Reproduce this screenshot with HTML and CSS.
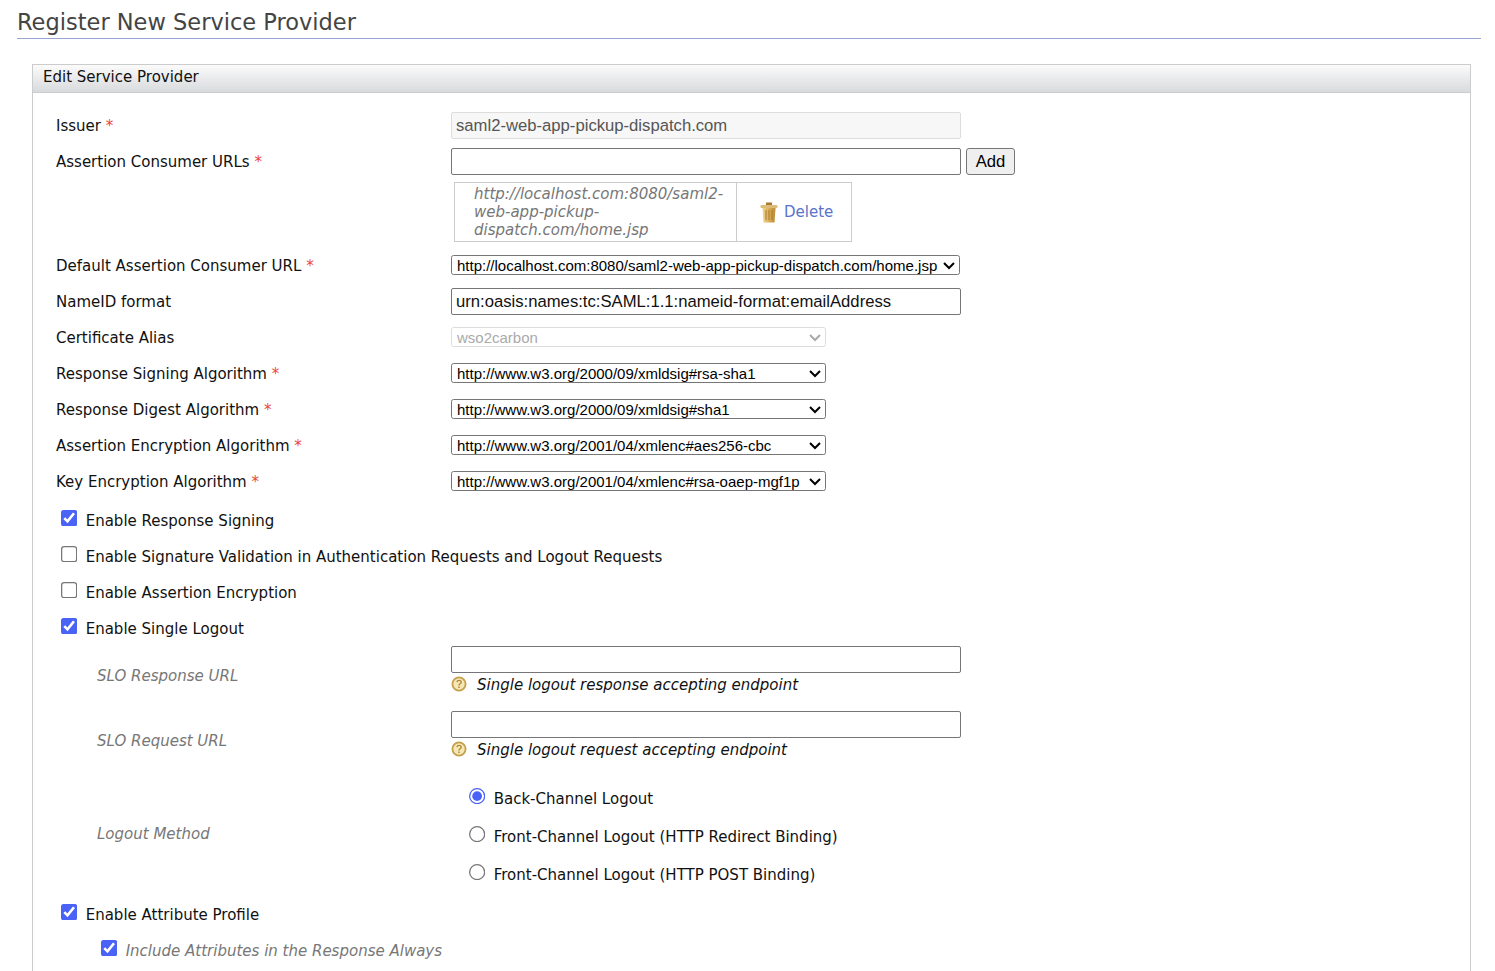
FILE: index.html
```html
<!DOCTYPE html>
<html lang="en">
<head>
    <meta charset="UTF-8">
    <title>Register New Service Provider</title>
    <link rel="stylesheet" href="styles.css">
</head>
<body>
    <h2 class="page-title">Register New Service Provider</h2>
    <div class="box">
        <div class="box-header">Edit Service Provider</div>
        <form class="box-body">
            <div class="row">
                <label class="name">Issuer <span class="req">*</span></label>
                <input type="text" class="text-input" value="saml2-web-app-pickup-dispatch.com" disabled>
            </div>
            <div class="row">
                <label class="name">Assertion Consumer URLs <span class="req">*</span></label>
                <input type="text" class="text-input">
                <button type="button" class="add-btn">Add</button>
            </div>
            <div class="url-row">
                <div class="url-table">
                    <div class="url-cell">http://localhost.com:8080/saml2-web-app-pickup-dispatch.com/home.jsp</div>
                    <div class="delete-cell">
                        <svg class="trash" width="18" height="21" viewBox="0 0 18 21">
                            <defs>
                                <linearGradient id="can" x1="0" x2="1" y1="0" y2="0">
                                    <stop offset="0" stop-color="#f0d596"/>
                                    <stop offset="0.5" stop-color="#dcae55"/>
                                    <stop offset="1" stop-color="#b98a35"/>
                                </linearGradient>
                            </defs>
                            <rect x="6" y="0.5" width="6" height="3" fill="#a9782c"/>
                            <rect x="0.5" y="3" width="17" height="3" rx="1" fill="#dcbc78"/>
                            <path d="M2.5 6h13l-1 14.500h-11z" fill="url(#can)"/>
                            <path d="M6 8v10M9 8v10M12 8v10" stroke="#a87a30" stroke-width="1"/>
                        </svg>
                        <a class="delete-link">Delete</a>
                    </div>
                </div>
            </div>
            <div class="row row-select row-tight">
                <label class="name">Default Assertion Consumer URL <span class="req">*</span></label>
                <select class="select-wide">
                    <option>http://localhost.com:8080/saml2-web-app-pickup-dispatch.com/home.jsp</option>
                </select>
            </div>
            <div class="row row-name">
                <label class="name">NameID format</label>
                <input type="text" class="text-input" value="urn:oasis:names:tc:SAML:1.1:nameid-format:emailAddress">
            </div>
            <div class="row row-select">
                <label class="name">Certificate Alias</label>
                <select class="select-mid" disabled><option>wso2carbon</option></select>
            </div>
            <div class="row row-select">
                <label class="name">Response Signing Algorithm <span class="req">*</span></label>
                <select class="select-mid"><option>http://www.w3.org/2000/09/xmldsig#rsa-sha1</option></select>
            </div>
            <div class="row row-select">
                <label class="name">Response Digest Algorithm <span class="req">*</span></label>
                <select class="select-mid"><option>http://www.w3.org/2000/09/xmldsig#sha1</option></select>
            </div>
            <div class="row row-select">
                <label class="name">Assertion Encryption Algorithm <span class="req">*</span></label>
                <select class="select-mid"><option>http://www.w3.org/2001/04/xmlenc#aes256-cbc</option></select>
            </div>
            <div class="row row-select">
                <label class="name">Key Encryption Algorithm <span class="req">*</span></label>
                <select class="select-mid"><option>http://www.w3.org/2001/04/xmlenc#rsa-oaep-mgf1p</option></select>
            </div>

            <label class="check-row check-first"><input type="checkbox" checked> Enable Response Signing</label>
            <label class="check-row"><input type="checkbox"> Enable Signature Validation in Authentication Requests and Logout Requests</label>
            <label class="check-row"><input type="checkbox"> Enable Assertion Encryption</label>
            <label class="check-row"><input type="checkbox" checked> Enable Single Logout</label>

            <div class="sub-row">
                <label class="sub-name">SLO Response URL</label>
                <div class="field">
                    <input type="text" class="text-input">
                    <div class="hint">
                        <svg class="help" width="16" height="16" viewBox="0 0 16 16">
                            <circle cx="8" cy="8" r="6.600" fill="#f6e7b8" stroke="#c4a04a" stroke-width="1.800"/>
                            <path d="M5.900 6.200c.2-1.200 1.100-1.800 2.200-1.800 1.200 0 2.100.7 2.100 1.800 0 1.600-2.200 1.600-2.200 3.200" fill="none" stroke="#b08a35" stroke-width="1.400"/>
                            <rect x="7.200" y="10.500" width="1.500" height="1.500" fill="#b08a35"/>
                        </svg>
                        <span>Single logout response accepting endpoint</span>
                    </div>
                </div>
            </div>
            <div class="sub-row">
                <label class="sub-name">SLO Request URL</label>
                <div class="field">
                    <input type="text" class="text-input">
                    <div class="hint">
                        <svg class="help" width="16" height="16" viewBox="0 0 16 16">
                            <circle cx="8" cy="8" r="6.600" fill="#f6e7b8" stroke="#c4a04a" stroke-width="1.800"/>
                            <path d="M5.900 6.200c.2-1.200 1.100-1.800 2.200-1.800 1.200 0 2.100.7 2.100 1.800 0 1.600-2.200 1.600-2.200 3.200" fill="none" stroke="#b08a35" stroke-width="1.400"/>
                            <rect x="7.200" y="10.500" width="1.500" height="1.500" fill="#b08a35"/>
                        </svg>
                        <span>Single logout request accepting endpoint</span>
                    </div>
                </div>
            </div>
            <div class="logout-row">
                <label class="sub-name">Logout Method</label>
                <div class="radios">
                    <label class="radio-row"><input type="radio" name="logout" checked> Back-Channel Logout</label>
                    <label class="radio-row"><input type="radio" name="logout"> Front-Channel Logout (HTTP Redirect Binding)</label>
                    <label class="radio-row"><input type="radio" name="logout"> Front-Channel Logout (HTTP POST Binding)</label>
                </div>
            </div>

            <label class="check-row"><input type="checkbox" checked> Enable Attribute Profile</label>
            <label class="check-row check-sub"><input type="checkbox" checked> Include Attributes in the Response Always</label>
        </form>
    </div>
</body>
</html>
```

FILE: styles.css
```css
html, body {
    height: 971px;
    overflow: hidden;
}
body {
    font-family: "DejaVu Sans", sans-serif;
    font-size: 15px;
    color: #111;
    background: #fff;
    margin: 0;
    padding: 0 14px 0 17px;
}
.page-title {
    font-size: 22.5px;
    font-weight: normal;
    line-height: 28px;
    color: #444;
    margin: 0 0 25px;
    padding: 8px 0 2px;
    border-bottom: 1px solid #98a6d0;
}
.box {
    margin: 0 10px 0 15px;
    border: 1px solid #ccc;
    border-bottom: none;
}
.box-header {
    height: 27px;
    line-height: 25px;
    padding-left: 10px;
    background: linear-gradient(#fbfbfb, #d8dadc);
    border-bottom: 1px solid #ccc;
}
.box-body {
    padding: 15px 0 40px 23px;
}
.row {
    display: flex;
    padding: 4px 0 5px;
}
.row-select {
    padding: 4px 0 12px;
}
.row-tight {
    padding-bottom: 9px;
}
.row-name {
    padding-bottom: 8px;
}
.name {
    width: 395px;
    height: 27px;
    box-sizing: border-box;
    padding-top: 1px;
    flex: none;
    line-height: 27px;
}
.row-select .name {
    height: 20px;
    line-height: 20px;
}
.req {
    color: #e9463c;
}
.text-input {
    width: 510px;
    height: 27px;
    box-sizing: border-box;
    font-family: "Liberation Sans", sans-serif;
    font-size: 16.67px;
    padding: 1px 4px;
    margin: 0;
    border: 1px solid #767676;
    border-radius: 2px;
    color: #111;
}
.text-input:disabled {
    background: #f7f7f7;
    border-color: #ddd;
    color: #555;
}
.add-btn {
    width: 49px;
    height: 27px;
    margin-left: 5px;
    padding: 0;
    font-family: "Liberation Sans", sans-serif;
    font-size: 16.67px;
    color: #000;
    background: #efefef;
    border: 1px solid #767676;
    border-radius: 3px;
}
.url-row {
    padding: 2px 0 9px 398px;
}
.url-table {
    display: flex;
    width: 398px;
    height: 60px;
    box-sizing: border-box;
    border: 1px solid #ccc;
}
.url-cell {
    width: 282px;
    box-sizing: border-box;
    padding: 2px 10px 0 19px;
    border-right: 1px solid #ccc;
    font-style: italic;
    line-height: 18px;
    color: #777;
    overflow-wrap: break-word;
}
.delete-cell {
    flex: 1;
    display: flex;
    align-items: center;
    padding-left: 23px;
    gap: 6px;
}
.delete-link {
    color: #5a74c9;
}
select {
    zoom: 1.25;
    height: 16px;
    box-sizing: border-box;
    font-family: "Liberation Sans", sans-serif;
    font-size: 12px;
    margin: 0;
    border-radius: 2px;
    background: #fff;
    color: #000;
    border: 1px solid #767676;
}
select:disabled {
    border-color: #ddd;
    color: #aaa;
    opacity: 1;
}
.select-wide {
    width: 407.2px;
}
.select-mid {
    width: 300px;
}
.check-row {
    display: flex;
    align-items: center;
    height: 36px;
    box-sizing: border-box;
    padding: 2px 0 0 5px;
}
.check-first {
    margin-top: -1px;
}
.check-row input, .radio-row input {
    zoom: 1.25;
    width: 13.6px;
    height: 13.6px;
    margin: -3.6px 6.16px 0 0;
    accent-color: #4a62f6;
    flex: none;
}
.check-sub {
    padding-left: 45px;
    font-style: italic;
    color: #777;
}
.sub-row {
    display: flex;
    height: 65px;
    padding-left: 41px;
}
.sub-name {
    width: 354px;
    flex: none;
    font-style: italic;
    color: #777;
    padding-top: 21px;
}
.hint {
    display: flex;
    align-items: center;
    height: 22px;
    padding-top: 1px;
    font-style: italic;
}
.help {
    margin-right: 10px;
    margin-top: -2px;
}
.field {
    height: 51px;
}
.logout-row {
    display: flex;
    align-items: center;
    padding: 3px 0 3px 41px;
}
.logout-row .sub-name {
    padding: 0 0 4px;
}
.radios {
    padding-left: 18px;
}
.radio-row {
    display: flex;
    align-items: center;
    height: 38px;
    box-sizing: border-box;
    padding-top: 2px;
}
```
